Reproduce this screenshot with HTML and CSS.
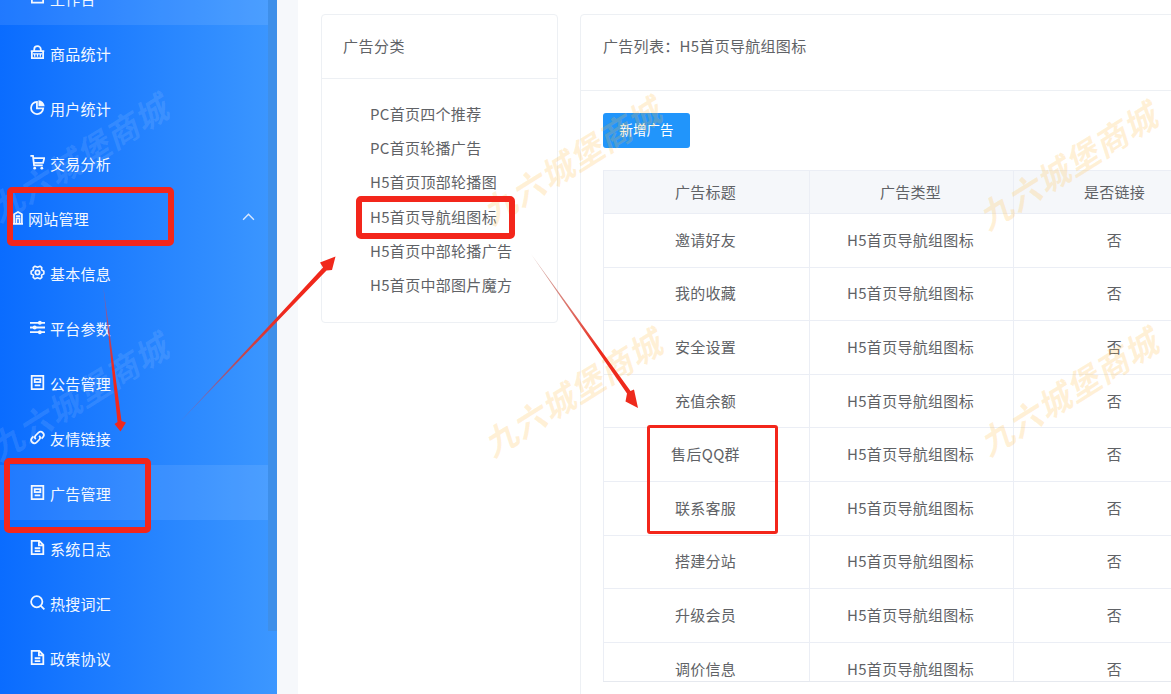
FILE: index.html
```html
<!DOCTYPE html>
<html lang="zh">
<head>
<meta charset="utf-8">
<title>广告管理</title>
<link rel="stylesheet" href="styles.css">
</head>
<body>
<div class="page">
  <aside class="sidebar">
    <nav class="menu">
      <a class="item active"><svg class="ic" viewBox="0 0 16 16"><path d="M2 6.5V2.500h12v11H2z" class="ln"/></svg><span>工作台</span></a>
      <a class="item"><svg class="ic" viewBox="0 0 16 16"><path class="ln" d="M4.500 6.500V4.500a3.500 3.200 0 0 1 7 0v2"/><path class="ln" d="M.8 6.600h14.400M2 6.600v7.400h12V6.600"/><path class="ln thin" d="M5 10v2.500M8 10v2.500M11 10v2.500M3 9.500h10"/></svg><span>商品统计</span></a>
      <a class="item"><svg class="ic" viewBox="0 0 16 16"><path class="ln" d="M7.400 2a6.500 6.500 0 1 0 6.700 7H7.400z"/><path class="dot" d="M9 .3v6.300h6.600A6.800 6.800 0 0 0 9 .3z"/></svg><span>用户统计</span></a>
      <a class="item"><svg class="ic" viewBox="0 0 16 16"><path class="ln" d="M.4 1h2.800l1.100 10h9.300M3.500 3.400h11.700l-1.300 5H4"/><circle cx="5" cy="14" r="1.500" class="dot"/><circle cx="12.600" cy="14" r="1.500" class="dot"/></svg><span>交易分析</span></a>
      <a class="item parent"><svg class="ic small" viewBox="0 0 11 15"><path class="ln" d="M0 14h11M1.200 14V3.500L5.500 1l4.300 2.500V14M3.800 14V8h3.400v6M3 5.500h5"/></svg><span>网站管理</span><svg class="chev" viewBox="0 0 12 7"><path d="M1 6l5-5 5 5"/></svg></a>
      <a class="item"><svg class="ic" viewBox="0 0 16 16"><path class="ln gear" d="M5.300 1.300L8 2.400l2.700-1.100 1.900 1.600-.3 2.300 2.500 1.400v2.800l-2.500 1.400.3 2.300-1.900 1.600L8 13.600l-2.700 1.100-1.900-1.600.3-2.300-2.500-1.400V6.600l2.500-1.400-.3-2.300z"/><circle cx="8" cy="8" r="2.300" class="ln"/></svg><span>基本信息</span></a>
      <a class="item"><svg class="ic" viewBox="0 0 16 16"><path class="ln" d="M0 3h16M0 8h16M0 13h16"/><circle cx="10.500" cy="3" r="2.100" class="dot"/><circle cx="5" cy="8" r="2.100" class="dot"/><circle cx="10.500" cy="13" r="2.100" class="dot"/></svg><span>平台参数</span></a>
      <a class="item"><svg class="ic" viewBox="0 0 16 16"><path class="ln" d="M1.800 1h12.400v14H1.800zM5 4.500h6v3H5zM5 11h6"/></svg><span>公告管理</span></a>
      <a class="item"><svg class="ic" viewBox="0 0 16 16"><path class="ln" d="M6.200 9.800a3 3 0 0 1 0-4.200L9 2.800a3.400 3.400 0 0 1 4.800 4.800l-1.500 1.500"/><path class="ln" d="M9.800 6.200a3 3 0 0 1 0 4.200L7 13.200a3.400 3.400 0 0 1-4.800-4.800l1.500-1.500"/></svg><span>友情链接</span></a>
      <a class="item active"><svg class="ic" viewBox="0 0 16 16"><path class="ln" d="M1.800 1h12.400v14H1.800zM5 4.500h6v3H5zM5 11h6"/></svg><span>广告管理</span></a>
      <a class="item"><svg class="ic" viewBox="0 0 16 16"><path class="ln" d="M1.800 1H10l4.200 4.200V15H1.800zM9.500 1v4.800h4.700M5 8.800h6M5 11.800h6"/></svg><span>系统日志</span></a>
      <a class="item"><svg class="ic" viewBox="0 0 16 16"><circle cx="7.200" cy="7.200" r="6" class="ln"/><path class="ln" d="M11.500 11.500l3.800 3.800"/></svg><span>热搜词汇</span></a>
      <a class="item"><svg class="ic" viewBox="0 0 16 16"><path class="ln" d="M1.800 1H10l4.200 4.200V15H1.800zM9.500 1v4.800h4.700M5 8.800h6M5 11.800h6"/></svg><span>政策协议</span></a>
    </nav>
    <div class="scrollbar"></div>
  </aside>

  <main class="content">
    <div class="panel">
      <section class="card side-card">
        <header class="card-head side-head">广告分类</header>
        <ul class="cats">
          <li>PC首页四个推荐</li>
          <li>PC首页轮播广告</li>
          <li>H5首页顶部轮播图</li>
          <li>H5首页导航组图标</li>
          <li>H5首页中部轮播广告</li>
          <li>H5首页中部图片魔方</li>
        </ul>
      </section>
      <section class="card list-card">
        <header class="card-head list-head">广告列表：H5首页导航组图标</header>
        <div class="list-body">
          <button class="btn">新增广告</button>
          <div class="table-wrap">
            <table class="grid">
              <colgroup><col class="c1"><col class="c2"><col class="c3"></colgroup>
              <thead><tr><th>广告标题</th><th>广告类型</th><th>是否链接</th></tr></thead>
              <tbody>
                <tr><td>邀请好友</td><td>H5首页导航组图标</td><td>否</td></tr>
                <tr><td>我的收藏</td><td>H5首页导航组图标</td><td>否</td></tr>
                <tr><td>安全设置</td><td>H5首页导航组图标</td><td>否</td></tr>
                <tr><td>充值余额</td><td>H5首页导航组图标</td><td>否</td></tr>
                <tr><td>售后QQ群</td><td>H5首页导航组图标</td><td>否</td></tr>
                <tr><td>联系客服</td><td>H5首页导航组图标</td><td>否</td></tr>
                <tr><td>搭建分站</td><td>H5首页导航组图标</td><td>否</td></tr>
                <tr><td>升级会员</td><td>H5首页导航组图标</td><td>否</td></tr>
                <tr><td>调价信息</td><td>H5首页导航组图标</td><td>否</td></tr>
              </tbody>
            </table>
          </div>
        </div>
      </section>
    </div>
  </main>

  <div class="wm wm-light w1">九六城堡商城</div>
  <div class="wm wm-light w2">九六城堡商城</div>
  <div class="wm wm-gold w3">九六城堡商城</div>
  <div class="wm wm-gold w4">九六城堡商城</div>
  <div class="wm wm-gold w5">九六城堡商城</div>
  <div class="wm wm-gold w6">九六城堡商城</div>

  <div class="mark m1"></div>
  <div class="mark m2"></div>
  <div class="mark m3"></div>
  <div class="mark m4"></div>

  <svg class="arrows" viewBox="0 0 1171 694">
    <defs>
      <linearGradient id="a1" gradientUnits="userSpaceOnUse" x1="177" y1="425" x2="285" y2="310"><stop offset="0" stop-color="#8a5aa0" stop-opacity=".35"/><stop offset=".6" stop-color="#c2474f"/><stop offset="1" stop-color="#f0281c"/></linearGradient>
      <linearGradient id="a2" gradientUnits="userSpaceOnUse" x1="532" y1="255" x2="600" y2="350"><stop offset="0" stop-color="#b06a60" stop-opacity=".5"/><stop offset="1" stop-color="#ee2a1c"/></linearGradient>
      <linearGradient id="a3" gradientUnits="userSpaceOnUse" x1="103" y1="285" x2="112" y2="370"><stop offset="0" stop-color="#a05a90" stop-opacity=".7"/><stop offset="1" stop-color="#f0281c"/></linearGradient>
    </defs>
    <path fill="url(#a1)" d="M177 425L323 267.500 320 262.500 335.500 256.500 332 270 326.500 270.500z"/>
    <path fill="url(#a2)" d="M531 254L630.500 391 634 389.500 638 408 625.500 401.500 627 393.500z"/>
    <path fill="url(#a3)" d="M103 284L121.500 421 126 422.500 120.500 431.500 114.500 424 117.500 422z"/>
  </svg>
</div>
</body>
</html>
```
FILE: styles.css
```css
* { box-sizing: border-box; }
html, body { margin: 0; padding: 0; }
body {
  font-family: "Noto Sans CJK SC", "Liberation Sans", sans-serif;
  background: #fff;
  overflow: hidden;
}
.page {
  position: relative;
  display: flex;
  width: 1171px;
  height: 694px;
  overflow: hidden;
}

/* sidebar */
.sidebar {
  position: relative;
  flex: 0 0 277px;
  height: 694px;
  overflow: hidden;
  background: linear-gradient(90deg, #0a6cff 0%, #3c97ff 100%);
}
.menu { margin-top: -30px; display: flex; flex-direction: column; }
.item {
  display: flex;
  align-items: center;
  height: 55px;
  padding: 3px 0 0 30px;
  color: #f3f8ff;
  font-size: 15px;
  letter-spacing: .25px;
  line-height: 20px;
}
.item.active { background: rgba(255, 255, 255, .09); }
.item.parent { padding-left: 13px; position: relative; }
.ic { width: 15px; height: 15px; margin-right: 5px; flex: none; margin-top: -3px; }
.ic.small { width: 10px; height: 14px; margin-right: 5px; margin-top: -3px; }
.ln { fill: none; stroke: #f3f8ff; stroke-width: 1.9; }
.ln.thin { stroke-width: 1.4; }
.ln.gear { stroke-linejoin: round; stroke-width: 1.7; }
.dot { fill: #f3f8ff; }
.chev { position: absolute; left: 242px; top: 23px; width: 13px; height: 8px; }
.chev path { fill: none; stroke: #d6e7ff; stroke-width: 1.3; }
.scrollbar {
  position: absolute;
  right: 0;
  top: 0;
  width: 9px;
  height: 631px;
  background: #3e8fe9;
}

/* content */
.content {
  flex: 1;
  min-width: 0;
  padding-left: 21px;
  background: #f6f8fb;
}
.panel {
  display: flex;
  align-items: flex-start;
  gap: 22px;
  height: 694px;
  padding: 14px 0 0 23px;
  background: #fff;
}
.card {
  border: 1px solid #edf0f4;
  border-radius: 4px;
  background: #fff;
}
.side-card { flex: 0 0 237px; height: 309px; }
.list-card { flex: 0 0 auto; width: 700px; height: 720px; }
.card-head {
  color: #606266;
  font-size: 15px;
  letter-spacing: .5px;
  line-height: 20px;
  border-bottom: 1px solid #edf0f4;
}
.side-head { height: 64px; padding: 21px 21px 0; }
.list-head { height: 76px; padding: 21px 22px 0; letter-spacing: .3px; }
.cats {
  list-style: none;
  margin: 0;
  padding: 18px 0 0 48px;
  color: #606266;
  font-size: 15px;
  letter-spacing: .3px;
}
.cats li { height: 34.2px; line-height: 34px; white-space: nowrap; }
.list-body { padding: 22px 0 0 22px; }
.btn {
  display: block;
  width: 87px;
  height: 35px;
  padding: 0 0 4px;
  border: 0;
  border-radius: 3px;
  background: #2195fb;
  color: #fff;
  font-family: inherit;
  font-size: 13.5px;
}
.table-wrap {
  width: 640px;
  height: 512px;
  margin-top: 22px;
  overflow: hidden;
  border-bottom: 1px solid #e6e9ef;
}
.grid {
  table-layout: fixed;
  width: 615px;
  border-collapse: separate;
  border-spacing: 0;
  border-left: 1px solid #ebeef5;
  color: #606266;
  font-size: 15px;
  letter-spacing: .3px;
}
.c1 { width: 206px; }
.c2 { width: 204px; }
.c3 { width: 204px; }
.grid th, .grid td {
  padding: 0 2px 2px 0;
  text-align: center;
  font-weight: 400;
  border-right: 1px solid #ebeef5;
  border-bottom: 1px solid #ebeef5;
  white-space: nowrap;
}
.grid th {
  height: 44px;
  background: #f5f7fa;
  border-top: 1px solid #ebeef5;
}
.grid td { height: 53.6px; }

/* overlays */
.wm {
  position: absolute;
  width: 210px;
  text-align: center;
  font-size: 33px;
  line-height: 40px;
  font-weight: 700;
  font-style: italic;
  letter-spacing: 1px;
  white-space: nowrap;
  transform: rotate(-32deg);
  pointer-events: none;
}
.wm-light { color: rgba(255, 255, 255, .1); }
.wm-gold { color: rgba(255, 190, 70, .22); }
.w1 { left: -27px; top: 137px; }
.w2 { left: -27px; top: 376px; }
.w3 { left: 466px; top: 140px; }
.w4 { left: 467px; top: 372px; }
.w5 { left: 962px; top: 145px; }
.w6 { left: 963px; top: 371px; }

.mark {
  position: absolute;
  border: 6px solid #f3261b;
  border-radius: 5px;
}
.m1 { left: 7px; top: 187px; width: 167px; height: 59px; }
.m2 { left: 4px; top: 458px; width: 147px; height: 75px; }
.m3 { left: 356px; top: 196px; width: 159px; height: 43px; }
.m4 { left: 647px; top: 425px; width: 131px; height: 109px; border-width: 3px; border-radius: 3px; }
.arrows { position: absolute; left: 0; top: 0; width: 1171px; height: 694px; pointer-events: none; }
```
